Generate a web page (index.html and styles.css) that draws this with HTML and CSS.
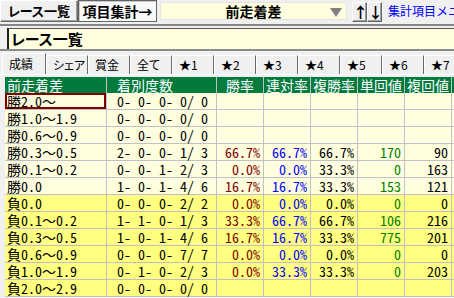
FILE: index.html
```html
<!DOCTYPE html>
<html lang="ja">
<head>
  <meta charset="UTF-8"/>
  <title>項目集計</title>
  <link rel="stylesheet" href="styles.css">
</head>
<body>

<div class="toolbar">
  <button class="btn btn-race">レース一覧</button>
  <button class="btn btn-on">項目集計→</button>
  <div class="select">前走着差<span class="caret"></span></div>
  <button class="btn btn-arrow">↑</button>
  <button class="btn btn-arrow">↓</button>
  <a class="menu-link" href="#">集計項目メニュー</a>
</div>

<div class="title-bar">
  <div class="title">レース一覧</div>
</div>

<div class="tabs">
  <span class="tab active">成績</span>
  <span class="tab">シェア</span>
  <span class="tab">賞金</span>
  <span class="tab">全て</span>
  <span class="tab">★1</span>
  <span class="tab">★2</span>
  <span class="tab">★3</span>
  <span class="tab">★4</span>
  <span class="tab">★5</span>
  <span class="tab">★6</span>
  <span class="tab">★7</span>
</div>

<div class="panel">
  <div class="row head">
    <div class="c name">前走着差</div>
    <div class="c rec">着別度数</div>
    <div class="c mid">勝率</div>
    <div class="c mid">連対率</div>
    <div class="c mid">複勝率</div>
    <div class="c mid">単回値</div>
    <div class="c mid">複回値</div>
    <div class="c"></div>
  </div>

  <!-- 勝ち -->
  <div class="row win">
    <div class="c name sel">勝2.0<span class="wave">～</span></div><div class="c rec">0- 0- 0- 0/ 0</div>
    <div class="c"></div><div class="c"></div><div class="c"></div><div class="c"></div><div class="c"></div><div class="c"></div>
  </div>
  <div class="row win">
    <div class="c name">勝1.0<span class="wave">～</span>1.9</div><div class="c rec">0- 0- 0- 0/ 0</div>
    <div class="c"></div><div class="c"></div><div class="c"></div><div class="c"></div><div class="c"></div><div class="c"></div>
  </div>
  <div class="row win">
    <div class="c name">勝0.6<span class="wave">～</span>0.9</div><div class="c rec">0- 0- 0- 0/ 0</div>
    <div class="c"></div><div class="c"></div><div class="c"></div><div class="c"></div><div class="c"></div><div class="c"></div>
  </div>
  <div class="row win">
    <div class="c name">勝0.3<span class="wave">～</span>0.5</div><div class="c rec">2- 0- 0- 1/ 3</div>
    <div class="c num red">66.7%</div><div class="c num blue">66.7%</div><div class="c num">66.7%</div>
    <div class="c num green">170</div><div class="c num">90</div><div class="c"></div>
  </div>
  <div class="row win">
    <div class="c name">勝0.1<span class="wave">～</span>0.2</div><div class="c rec">0- 0- 1- 2/ 3</div>
    <div class="c num red">0.0%</div><div class="c num blue">0.0%</div><div class="c num">33.3%</div>
    <div class="c num green">0</div><div class="c num">163</div><div class="c"></div>
  </div>
  <div class="row win">
    <div class="c name">勝0.0</div><div class="c rec">1- 0- 1- 4/ 6</div>
    <div class="c num red">16.7%</div><div class="c num blue">16.7%</div><div class="c num">33.3%</div>
    <div class="c num green">153</div><div class="c num">121</div><div class="c"></div>
  </div>

  <!-- 負け -->
  <div class="row lose">
    <div class="c name">負0.0</div><div class="c rec">0- 0- 0- 2/ 2</div>
    <div class="c num red">0.0%</div><div class="c num blue">0.0%</div><div class="c num">0.0%</div>
    <div class="c num green">0</div><div class="c num">0</div><div class="c"></div>
  </div>
  <div class="row lose">
    <div class="c name">負0.1<span class="wave">～</span>0.2</div><div class="c rec">1- 1- 0- 1/ 3</div>
    <div class="c num red">33.3%</div><div class="c num blue">66.7%</div><div class="c num">66.7%</div>
    <div class="c num green">106</div><div class="c num">216</div><div class="c"></div>
  </div>
  <div class="row lose">
    <div class="c name">負0.3<span class="wave">～</span>0.5</div><div class="c rec">1- 0- 1- 4/ 6</div>
    <div class="c num red">16.7%</div><div class="c num blue">16.7%</div><div class="c num">33.3%</div>
    <div class="c num green">775</div><div class="c num">201</div><div class="c"></div>
  </div>
  <div class="row lose">
    <div class="c name">負0.6<span class="wave">～</span>0.9</div><div class="c rec">0- 0- 0- 7/ 7</div>
    <div class="c num red">0.0%</div><div class="c num blue">0.0%</div><div class="c num">0.0%</div>
    <div class="c num green">0</div><div class="c num">0</div><div class="c"></div>
  </div>
  <div class="row lose">
    <div class="c name">負1.0<span class="wave">～</span>1.9</div><div class="c rec">0- 1- 0- 2/ 3</div>
    <div class="c num red">0.0%</div><div class="c num blue">33.3%</div><div class="c num">33.3%</div>
    <div class="c num green">0</div><div class="c num">203</div><div class="c"></div>
  </div>
  <div class="row lose">
    <div class="c name">負2.0<span class="wave">～</span>2.9</div><div class="c rec">0- 0- 0- 0/ 0</div>
    <div class="c"></div><div class="c"></div><div class="c"></div><div class="c"></div><div class="c"></div><div class="c"></div>
  </div>
</div>

</body>
</html>
```

FILE: styles.css
```css
body {
  margin: 0;
  width: 454px;
  height: 298px;
  overflow: hidden;
  background: #f0f0f0;
  font-family: "Noto Sans CJK JP", sans-serif;
  color: #000;
}

/* 上部ツールバー */
.toolbar {
  display: flex;
  align-items: flex-start;
  height: 24px;
  overflow: hidden;
}
.btn {
  flex: none;
  height: 22px;
  padding: 0;
  background: #f0f0f0;
  border: 1px solid;
  border-color: #fff #696969 #696969 #fff;
  box-shadow: inset -1px -1px #a0a0a0;
  font: bold 13px/18px "Noto Sans CJK JP", sans-serif;
  font-feature-settings: "palt";
  color: #000;
}
.btn-race {
  width: 78px;
}
.btn-on {
  width: 79px;
  background: #f8f8f8;
  border-color: #646464;
  box-shadow: inset 1px 1px #c8c8c8;
  font-size: 14px;
  font-feature-settings: normal;
}
.select {
  flex: none;
  position: relative;
  margin: 2px 5px 0 3px;
  width: 187px;
  height: 18px;
  box-sizing: border-box;
  background: #ffffe0;
  border: 1px solid #e4e4e4;
  text-align: center;
  font-weight: bold;
  font-size: 14px;
  line-height: 16px;
}
.caret {
  position: absolute;
  right: 4px;
  top: 5px;
  border-left: 6px solid transparent;
  border-right: 6px solid transparent;
  border-top: 9px solid #808080;
}
.btn-arrow {
  margin-top: 2px;
  width: 15px;
  height: 20px;
  font-size: 15px;
  line-height: 16px;
  font-feature-settings: normal;
}
.menu-link {
  flex: none;
  margin: 4px 0 0 6px;
  color: #0000ff;
  text-decoration: none;
  font-size: 12px;
  line-height: 14px;
  white-space: nowrap;
}

/* タイトル */
.title-bar {
  border-top: 2px solid #858585;
  border-bottom: 2px solid #8c8c8c;
  padding: 2px 0 0 7px;
}
.title {
  height: 21px;
  box-sizing: border-box;
  background: #ffffe0;
  border-left: 2px solid #1e1e1e;
  border-top: 1px solid #5a5a5a;
  padding-left: 2px;
  font-weight: bold;
  font-size: 15px;
  line-height: 19px;
  font-feature-settings: "palt";
}

/* タブ */
.tabs {
  display: flex;
  align-items: flex-end;
  height: 22px;
  margin-top: 1px;
  padding-left: 2px;
  overflow: hidden;
}
.tab {
  flex: none;
  width: 42px;
  height: 19px;
  box-sizing: border-box;
  border: 1px solid;
  border-color: #fff #696969 transparent #fff;
  border-bottom: none;
  padding-left: 6px;
  font-size: 12px;
  line-height: 17px;
  white-space: nowrap;
  font-feature-settings: "palt";
}
.tab.active {
  position: relative;
  width: 44px;
  height: 22px;
  margin-bottom: -1px;
  background: #f0f0f0;
  line-height: 19px;
}

/* 集計表 */
.panel {
  border-top: 1px solid #fff;
  padding: 2px 0 0 5px;
}
.row {
  display: grid;
  grid-template-columns: 102px 110px 47px 47px 47px 47px 47px 40px;
  height: 17px;
  font-size: 14px;
  line-height: 16px;
  font-feature-settings: "hwid";
}
.c {
  box-sizing: border-box;
  border-right: 1px solid #c0c0c8;
  border-bottom: 1px solid #c0c0c8;
  white-space: pre;
}
.wave {
  font-feature-settings: normal;
}
.head {
  height: 16px;
  background: #007a3d;
  color: #fff;
}
.head .c {
  border-bottom: none;
  font-feature-settings: normal;
}
.win {
  background: #ffffe0;
}
.lose {
  background: #ffff80;
}
.name {
  padding-left: 2px;
}
.rec {
  padding-left: 10px;
}
.mid {
  text-align: center;
}
.num {
  text-align: right;
  padding-right: 3px;
}
.sel {
  box-shadow: inset 0 0 0 2px #800000;
}
.red {
  color: #800000;
}
.blue {
  color: #0000ff;
}
.green {
  color: #008000;
}
```
